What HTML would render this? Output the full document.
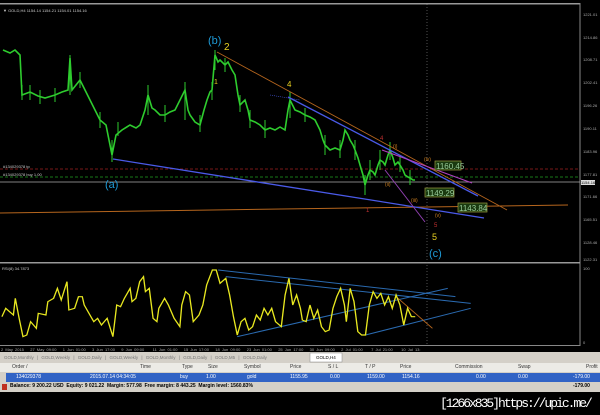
<!DOCTYPE html>
<html><head><meta charset="utf-8"><style>
body{margin:0;width:600px;height:415px;background:#000;overflow:hidden;font-family:"Liberation Sans",sans-serif;position:relative}
.t{position:absolute;white-space:nowrap}
.ax{font-size:4px;color:#aaa}
.row{position:absolute;left:0;width:600px;font-size:5px}
.row span{position:absolute;top:1px}
</style></head><body>
<svg width="600" height="415" style="position:absolute;left:0;top:0">
<rect x="0" y="3" width="580" height="1.5" fill="#999"/>
<line x1="580" y1="3" x2="580" y2="346" stroke="#888" stroke-width="1"/>
<rect x="0" y="262" width="580" height="1.5" fill="#999"/>
<line x1="0" y1="345.5" x2="580" y2="345.5" stroke="#888"/>
<line x1="0" y1="169" x2="580" y2="169" stroke="#a02020" stroke-dasharray="3,2" stroke-width="0.8"/>
<line x1="0" y1="177" x2="580" y2="177" stroke="#20a020" stroke-dasharray="3,2" stroke-width="0.8"/>
<line x1="0" y1="182" x2="580" y2="182" stroke="#aaa" stroke-width="0.8"/>
<line x1="0" y1="213" x2="568" y2="205" stroke="#b5651d" stroke-width="1"/>
<line x1="427" y1="4" x2="427" y2="345" stroke="#888" stroke-dasharray="1,2" stroke-width="0.6"/>
<g stroke="#2ecc2e" fill="none">
<polyline stroke-width="1.6" points="3,50 10,53 15,50 20,55 22,95 30,92 38,96 45,98 55,95 62,92 68,90 70,58 72,90 80,80 86,92 90,100 95,110 100,120 106,125 112,155 116,135 122,130 130,125 136,128 140,125 145,110 148,95 152,108 155,110 160,115 165,115 170,112 175,110 180,100 185,90 188,110 190,115 195,122 200,125 204,110 207,100 210,92 212,90 215,55 218,62 220,60 225,65 228,62 232,70 235,75 238,95 240,105 245,100 248,110 250,120 255,122 260,125 265,130 270,128 275,130 280,127 285,130 288,110 290,100 293,106 295,110 300,112 305,115 310,117 315,120 320,130 323,140 325,145 330,150 335,148 340,150 343,140 345,130 348,135 350,140 353,145 355,150 358,158 360,165 363,175 365,185 368,175 370,170 373,172 375,175 378,165 380,160 383,162 385,165 388,155 390,150 393,158 395,165 398,162 400,165 403,170 405,175 408,177 410,178 413,180 415,180"/>
<path stroke-width="1" d="M22,85V100M30,85V100M40,90V104M55,88V102M70,55V95M80,72V88M100,112V128M112,140V162M118,122V136M148,85V115M165,105V122M185,82V120M200,115V132M212,82V100M215,50V70M225,58V72M240,95V112M250,110V128M265,120V138M290,92V118M305,108V122M325,135V155M340,140V158M355,140V160M365,175V195M370,160V180M380,150V170M390,142V160M400,155V172M410,170V185"/>
</g>
<line x1="113" y1="159" x2="484" y2="218" stroke="#4a5ae8" stroke-width="1.3"/>
<line x1="288" y1="97" x2="478" y2="196" stroke="#4a5ae8" stroke-width="1.3"/>
<line x1="217" y1="52" x2="507" y2="210" stroke="#b5651d" stroke-width="0.9"/>
<line x1="382" y1="150" x2="472" y2="183" stroke="#b040c0" stroke-width="1"/>
<line x1="385" y1="170" x2="425" y2="222" stroke="#9040b0" stroke-width="1"/>
<line x1="270" y1="95" x2="300" y2="100" stroke="#4a5ae8" stroke-dasharray="1,1" stroke-width="0.6"/>
<g font-family="Liberation Sans" font-size="11">
<text x="208" y="44" fill="#1e9ad6">(b)</text>
<text x="224" y="50" fill="#e8d020" font-size="10">2</text>
<text x="214" y="84" fill="#e8d020" font-size="7">1</text>
<text x="287" y="87" fill="#e8d020" font-size="8">4</text>
<text x="105" y="188" fill="#1e9ad6">(a)</text>
<text x="432" y="240" fill="#e8d020" font-size="9">5</text>
<text x="429" y="257" fill="#1e9ad6">(c)</text>
<text x="380" y="140" fill="#c03030" font-size="6">4</text>
<text x="434" y="227" fill="#c03030" font-size="6">5</text>
<text x="366" y="212" fill="#c03030" font-size="6">1</text>
<text x="393" y="148" fill="#d08020" font-size="5">(i)</text>
<text x="424" y="161" fill="#d08020" font-size="5">(iv)</text>
<text x="385" y="186" fill="#d08020" font-size="5">(ii)</text>
<text x="411" y="202" fill="#d08020" font-size="5">(iii)</text>
<text x="435" y="217" fill="#d08020" font-size="5">(v)</text>
</g>
<g font-family="Liberation Sans" font-size="8">
<rect x="435" y="161" width="26" height="9" fill="#1a3a10" stroke="#9a9a40" stroke-width="0.7"/><text x="436" y="169" fill="#9c9">1160.45</text>
<rect x="425" y="188" width="29" height="9" fill="#1a3a10" stroke="#9a9a40" stroke-width="0.7"/><text x="426" y="196" fill="#9c9">1149.29</text>
<rect x="458" y="203" width="29" height="9" fill="#1a3a10" stroke="#9a9a40" stroke-width="0.7"/><text x="459" y="211" fill="#9c9">1143.84</text>
</g>
<g transform="translate(0,255) scale(0.3827,0.3333)" fill="none">
<line x1="570" y1="45" x2="1190" y2="125" stroke="#2a6ab0" stroke-width="3"/>
<line x1="590" y1="65" x2="1230" y2="145" stroke="#2a6ab0" stroke-width="3"/>
<line x1="620" y1="245" x2="1170" y2="100" stroke="#2a6ab0" stroke-width="3"/>
<line x1="955" y1="240" x2="1230" y2="160" stroke="#2a6ab0" stroke-width="3"/>
<line x1="1040" y1="130" x2="1130" y2="220" stroke="#b5651d" stroke-width="2.5"/>
<polyline stroke="#e8e820" stroke-width="3.5" points="5,185 15,160 25,170 35,180 40,130 50,190 60,245 70,240 80,200 95,220 100,175 120,180 125,140 140,130 150,100 160,135 175,80 180,165 195,160 205,125 215,125 220,150 235,180 245,200 255,190 265,210 280,190 295,245 305,150 315,155 325,130 340,100 345,140 355,130 365,80 375,65 380,110 390,100 400,190 410,200 415,160 430,130 440,150 455,190 470,215 475,150 485,110 495,120 505,200 520,180 530,150 540,90 555,45 565,45 575,85 590,70 600,120 610,185 620,240 630,200 640,190 650,225 660,215 670,180 680,195 690,160 700,180 710,160 720,200 735,215 745,120 755,70 765,150 775,120 785,160 790,195 800,200 810,150 820,190 830,165 840,215 850,230 860,225 870,160 880,125 890,100 900,150 905,200 915,100 925,140 935,230 945,240 955,240 965,150 975,110 985,130 995,115 1005,150 1015,125 1025,160 1035,120 1045,150 1055,210 1065,160 1075,185 1085,185"/>
</g>
<rect x="0" y="352" width="600" height="63" fill="#000"/>
<rect x="0" y="352" width="600" height="40" fill="#d4d0c8"/>
<rect x="310" y="353" width="32" height="9" fill="#fff" stroke="#888" stroke-width="0.5"/>
<rect x="0" y="363" width="600" height="9" fill="#ecebe6"/>
<rect x="6" y="373" width="594" height="9" fill="#3163c5"/>
<rect x="0" y="382" width="600" height="10" fill="#d4d0c8"/>
<rect x="2" y="384" width="5" height="6" fill="#c03020"/>
</svg>
<div class="t ax" style="left:3px;top:8px;color:#ccc">▼ GOLD,H4 1154.14 1154.21 1154.01 1154.16</div>
<div class="t ax" style="left:3px;top:164px;color:#ccc">#134029378 tp</div>
<div class="t ax" style="left:3px;top:172px;color:#ccc">#134029378 buy 1.00</div>
<div class="t ax" style="left:2px;top:266px;color:#ccc">RSI(8) 34.7873</div>
<div class="t ax" style="left:583px;top:12px">1221.01</div>
<div class="t ax" style="left:583px;top:35px">1214.86</div>
<div class="t ax" style="left:583px;top:57px">1208.71</div>
<div class="t ax" style="left:583px;top:80px">1202.41</div>
<div class="t ax" style="left:583px;top:103px">1196.26</div>
<div class="t ax" style="left:583px;top:126px">1190.11</div>
<div class="t ax" style="left:583px;top:149px">1183.96</div>
<div class="t ax" style="left:583px;top:172px">1177.81</div>
<div class="t ax" style="left:583px;top:194px">1171.66</div>
<div class="t ax" style="left:583px;top:217px">1165.51</div>
<div class="t ax" style="left:583px;top:240px">1128.46</div>
<div class="t ax" style="left:581px;top:180px;background:#ddd;color:#000">1154.16</div>
<div class="t ax" style="left:583px;top:257px">1122.31</div>
<div class="t ax" style="left:583px;top:266px">100</div>
<div class="t ax" style="left:583px;top:340px">0</div>
<div class="t ax" style="left:1px;top:347px;word-spacing:1px">2 May 2015 &nbsp; 27 May 09:00 &nbsp; 1 Jun 01:00 &nbsp; 3 Jun 17:00 &nbsp; 9 Jun 09:00 &nbsp;&nbsp; 11 Jun 01:00 &nbsp; 15 Jun 17:00 &nbsp; 18 Jun 09:00 &nbsp; 23 Jun 01:00 &nbsp; 25 Jun 17:00 &nbsp; 30 Jun 09:00 &nbsp; 2 Jul 01:00 &nbsp;&nbsp; 7 Jul 21:00 &nbsp;&nbsp; 10 Jul 13:</div>
<div class="t" style="left:4px;top:355px;font-size:4.5px;color:#777;word-spacing:2px">GOLD,Monthly | GOLD,Weekly | GOLD,Daily | GOLD,Weekly | GOLD,Monthly | GOLD,Daily | GOLD,M5 | GOLD,Daily</div>
<div class="t" style="left:316px;top:355px;font-size:4.5px;color:#000">GOLD,H4</div>
<div class="row" style="top:363px;height:9px;color:#333"><span style="left:12px">Order /</span><span style="left:140px">Time</span><span style="left:182px">Type</span><span style="left:208px">Size</span><span style="left:244px">Symbol</span><span style="left:290px">Price</span><span style="left:328px">S / L</span><span style="left:365px">T / P</span><span style="left:400px">Price</span><span style="left:455px">Commission</span><span style="left:518px">Swap</span><span style="left:586px">Profit</span></div>
<div class="row" style="top:373px;height:9px;color:#fff"><span style="left:16px">134029378</span><span style="left:90px">2015.07.14 04:34:05</span><span style="left:180px">buy</span><span style="left:206px">1.00</span><span style="left:247px">gold</span><span style="left:290px">1155.95</span><span style="left:330px">0.00</span><span style="left:367px">1159.00</span><span style="left:402px">1154.16</span><span style="left:476px">0.00</span><span style="left:518px">0.00</span><span style="left:573px">-179.00</span></div>
<div class="row" style="top:382px;height:10px;color:#000;font-weight:bold"><span style="left:10px">Balance: 9 200.22 USD &nbsp;Equity: 9 021.22 &nbsp;Margin: 577.98 &nbsp;Free margin: 8 443.25 &nbsp;Margin level: 1560.83%</span><span style="left:573px">-179.00</span></div>
<div class="t" style="left:440px;top:396px;font-size:13px;color:#fff;font-family:'Liberation Mono',monospace;letter-spacing:-2px">[1266x835]https://upic.me/</div>
</body></html>
